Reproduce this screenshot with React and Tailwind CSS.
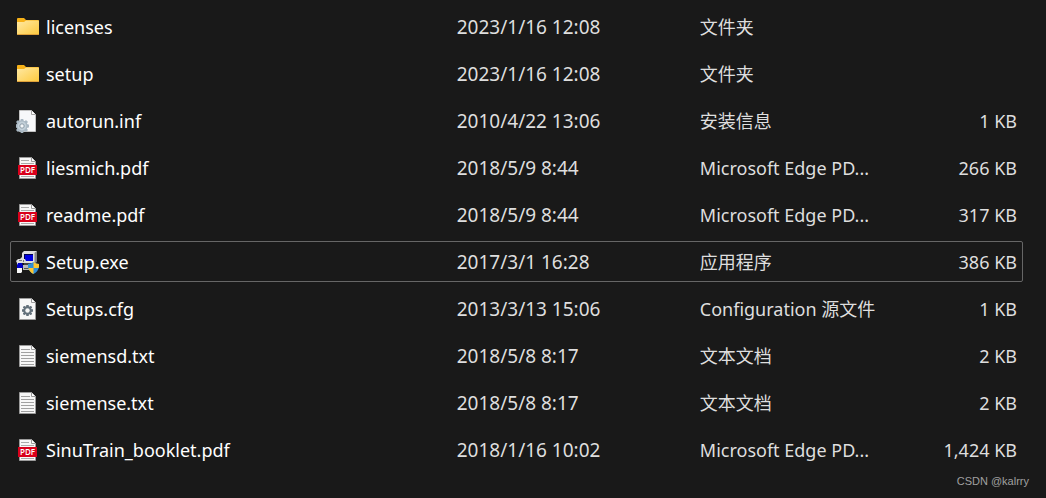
import React from "react";

function FolderIcon() {
  return (
    <svg width="24" height="24" viewBox="0 0 24 24" aria-hidden="true">
      <defs>
        <linearGradient id="folder" x1="0" y1="0" x2="1" y2="1">
          <stop offset="0" stopColor="#ffe9a4" />
          <stop offset="1" stopColor="#fdc93c" />
        </linearGradient>
      </defs>
      <path d="M1 4Q1 3 2 3H8L10 5H22Q23 5 23 6V12H1Z" fill="#f6b118" />
      <path d="M1 7H8L10 5.5H22.5Q23 5.5 23 6V19Q23 20 22 20H2Q1 20 1 19Z" fill="url(#folder)" />
      <path d="M1 19H23Q23 20 22 20H2Q1 20 1 19Z" fill="#dfa13a" />
    </svg>
  );
}

function Page() {
  return (
    <>
      <path d="M3.5 1.5H15.5L19.5 5.5V22.5H3.5Z" fill="#f7f7f7" stroke="#9b9b9b" />
      <path d="M15.5 1.5V5.5H19.5" fill="#fff" stroke="#9b9b9b" />
    </>
  );
}

const TEETH = [0, 45, 90, 135, 180, 225, 270, 315];

function InfIcon() {
  return (
    <svg width="24" height="24" viewBox="0 0 24 24" aria-hidden="true">
      <path d="M3.5 1.5H15.5L19.5 5.5V22.5H3.5Z" fill="#f7f8fa" stroke="#c2c2c2" />
      <path d="M15.5 1.5V5.5H19.5" fill="#fff" stroke="#a5a5a5" />
      <g fill="#a9b8c3">
        {TEETH.map((a) => (
          <rect key={a} x="4.6" y="10" width="2.8" height="14" rx="1" transform={`rotate(${a} 6 17)`} />
        ))}
        <circle cx="6" cy="17" r="5.6" />
      </g>
      <circle cx="6" cy="17" r="4.4" fill="#c3d0d9" />
      <circle cx="6" cy="17" r="2.2" fill="#f4f7f9" stroke="#8c9ba7" />
    </svg>
  );
}

function CfgIcon() {
  return (
    <svg width="24" height="24" viewBox="0 0 24 24" aria-hidden="true">
      <Page />
      <g fill="#63717b">
        {TEETH.map((a) => (
          <rect key={a} x="10.5" y="8" width="2" height="11" transform={`rotate(${a} 11.5 13.5)`} />
        ))}
        <circle cx="11.5" cy="13.5" r="4.4" />
      </g>
      <circle cx="11.5" cy="13.5" r="2.2" fill="#f7f7f7" />
    </svg>
  );
}

function TxtIcon() {
  return (
    <svg width="24" height="24" viewBox="0 0 24 24" aria-hidden="true">
      <Page />
      <path d="M5 5.5H14M5 8.5H18M5 11.5H18M5 14.5H18M5 17.5H18M5 20.5H18" stroke="#a0a0a0" />
    </svg>
  );
}

function PdfIcon() {
  return (
    <svg width="24" height="24" viewBox="0 0 24 24" aria-hidden="true">
      <Page />
      <path d="M5 4.5H13M5 7.5H18M5 20.5H18" stroke="#aaa" />
      <rect x="2" y="9" width="19" height="10" fill="#d9001b" />
      <text x="11.5" y="17" textAnchor="middle" fontFamily="Open Sans, sans-serif" fontSize="8" fontWeight="600" fill="#fff">PDF</text>
    </svg>
  );
}

function SetupIcon() {
  return (
    <svg width="24" height="24" viewBox="0 0 24 24" aria-hidden="true">
      <path d="M18 3L21 1V12L18 14Z" fill="#858585" />
      <path d="M6 3L8 1H21L18.5 3V13H6Z" fill="#dedede" />
      <rect x="8" y="4" width="9" height="7" fill="#0000e0" />
      <path d="M8 4.5H17M8.5 4V11" stroke="#000050" />
      <path d="M8 13H16V15H8Z" fill="#444" />
      <path d="M7 15H18L20 17V20H7Z" fill="#b9b9b9" />
      <path d="M8 18.5H13" stroke="#555" />
      <path d="M0 11L2 9H4L6 7H8L7 9H9L10 11L8 13H1Z" fill="#dcdcdc" />
      <path d="M3 10.5H6M7.5 10V12" stroke="#777" />
      <path d="M1 13H6V22L5 23H1Z" fill="#f8f8f8" />
      <path d="M2 13H6L7 16V18H1V15Z" fill="#0000c8" />
      <path d="M12 14Q15 14 17.5 12Q20 14 23 14V17Q22 22 17.5 24Q13 22 12 17Z" fill="#2f8fd8" />
      <path d="M17.5 12Q20 14 23 14V17L22.6 18H17.5ZM12.4 18H17.5V24Q13.5 22 12.4 18Z" fill="#fdc62f" />
    </svg>
  );
}

const ICONS = { folder: FolderIcon, inf: InfIcon, pdf: PdfIcon, exe: SetupIcon, cfg: CfgIcon, txt: TxtIcon };

const FILES = [
  { icon: "folder", name: "licenses", date: "2023/1/16 12:08", type: "文件夹", size: "" },
  { icon: "folder", name: "setup", date: "2023/1/16 12:08", type: "文件夹", size: "" },
  { icon: "inf", name: "autorun.inf", date: "2010/4/22 13:06", type: "安装信息", size: "1 KB" },
  { icon: "pdf", name: "liesmich.pdf", date: "2018/5/9 8:44", type: "Microsoft Edge PD...", size: "266 KB" },
  { icon: "pdf", name: "readme.pdf", date: "2018/5/9 8:44", type: "Microsoft Edge PD...", size: "317 KB" },
  { icon: "exe", name: "Setup.exe", date: "2017/3/1 16:28", type: "应用程序", size: "386 KB", focused: true },
  { icon: "cfg", name: "Setups.cfg", date: "2013/3/13 15:06", type: "Configuration 源文件", size: "1 KB" },
  { icon: "txt", name: "siemensd.txt", date: "2018/5/8 8:17", type: "文本文档", size: "2 KB" },
  { icon: "txt", name: "siemense.txt", date: "2018/5/8 8:17", type: "文本文档", size: "2 KB" },
  { icon: "pdf", name: "SinuTrain_booklet.pdf", date: "2018/1/16 10:02", type: "Microsoft Edge PD...", size: "1,424 KB" },
];

export default function App() {
  return (
    <main className="min-h-screen bg-[#191919] pr-[23px] pl-[10px] font-['Noto_Sans','Noto_Sans_CJK_SC',sans-serif] text-[18px] leading-6 text-[#dedede]">
      <table className="w-full table-fixed border-separate border-spacing-x-0 border-spacing-y-[6px]">
        <colgroup>
          <col className="w-[44%]" />
          <col className="w-[24%]" />
          <col className="w-[19%]" />
          <col className="w-[13%]" />
        </colgroup>
        <tbody>
          {FILES.map(({ icon, name, date, type, size, focused }) => {
            const Icon = ICONS[icon];
            return (
              <tr
                key={name}
                className={focused ? "h-[41px] rounded-xs outline-1 -outline-offset-1 outline-[#666]" : "h-[41px]"}
              >
                <td className="p-0 pl-[6px]">
                  <div className="flex items-center gap-[6px] text-white">
                    <Icon />
                    <span>{name}</span>
                  </div>
                </td>
                <td className="p-0 pl-px text-[19px] whitespace-nowrap">{date}</td>
                <td className="p-0 pl-px whitespace-nowrap">{type}</td>
                <td className="p-0 pr-[6px] text-right whitespace-nowrap">{size}</td>
              </tr>
            );
          })}
        </tbody>
      </table>
      <footer className="-mt-[3px] -mr-[6px] text-right font-['Liberation_Sans',sans-serif] text-[11px] leading-4 text-[#a0a0a0]">
        CSDN @kalrry
      </footer>
    </main>
  );
}
